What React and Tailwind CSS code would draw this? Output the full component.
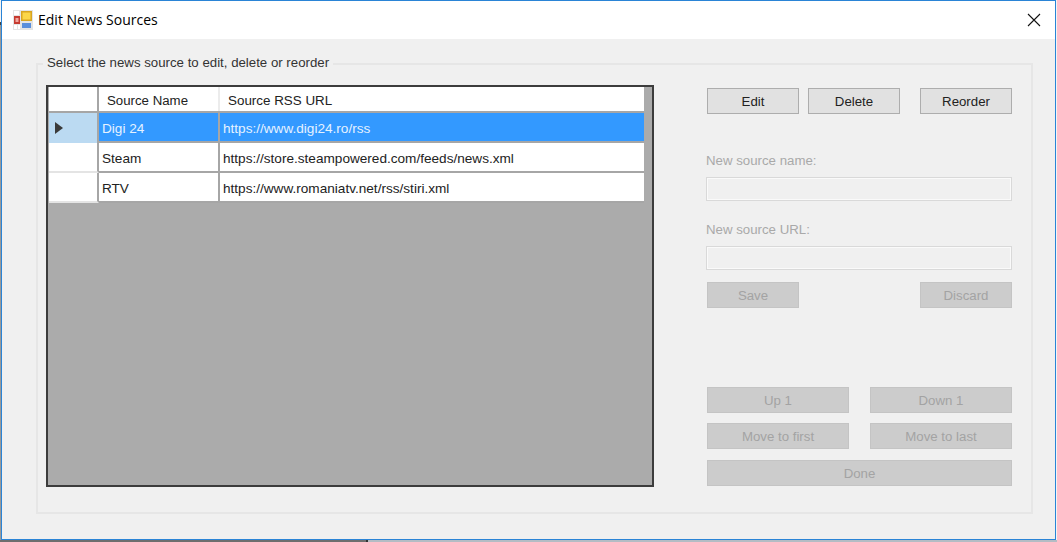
import React from 'react';

const rows = [
  { name: 'Digi 24', url: 'https://www.digi24.ro/rss', selected: true },
  { name: 'Steam', url: 'https://store.steampowered.com/feeds/news.xml' },
  { name: 'RTV', url: 'https://www.romaniatv.net/rss/stiri.xml' },
];

// Enabled and disabled WinForms buttons
const Btn = ({ w, disabled, children }) => (
  <div
    className={
      disabled
        ? `${w} h-[26px] pt-px flex items-center justify-center border border-[#c4c4c4] bg-[#cccccc] text-[#a3a3a3]`
        : `${w} h-[26px] pt-px flex items-center justify-center border border-[#adadad] bg-[#e1e1e1] text-[#222222]`
    }
  >
    {children}
  </div>
);

const Field = ({ label }) => (
  <div className="flex flex-col">
    <div className="h-[17px] leading-[17px] text-[#a9a9a9]">{label}</div>
    <div className="mt-[8px] w-[306px] h-[24px] border border-[#d9d9d9] bg-[#f0f0f0] shadow-[inset_0_0_0_1px_#fafafa]" />
  </div>
);

export default function App() {
  return (
    <div className="w-[1057px] h-[542px] overflow-hidden bg-white flex flex-col font-['Liberation_Sans',sans-serif] text-[13.25px]">
      <div className="flex h-[540px]">
        {/* Desktop showing to the left of the window */}
        <div className="w-px flex flex-col">
          <div className="h-[22px] bg-[#f4f4f4]" />
          <div className="h-[3px] bg-[#444444]" />
          <div className="flex-1 bg-[#9a9a9a]" />
        </div>

        <div className="w-[1055px] h-[540px] border border-[#2a84d6] bg-[#f0f0f0] flex flex-col">
          {/* Title bar */}
          <div className="h-[38px] shrink-0 bg-white flex items-center pl-[11px] pr-[14px]">
            <svg width="20" height="20" viewBox="0 0 20 20" className="shrink-0">
              <rect x="0" y="0" width="20" height="20" fill="#e4e4e4" />
              <rect x="1" y="1" width="5" height="4" fill="#ffffff" />
              <rect x="1" y="6" width="6" height="8" fill="#c63a30" />
              <rect x="2.5" y="8" width="3" height="4" fill="#f0a8a0" />
              <rect x="8" y="1" width="11" height="10" fill="#d9a520" />
              <rect x="9.5" y="2.5" width="8" height="7" fill="#fbd648" />
              <rect x="9" y="13" width="9" height="5" fill="#5a8fdc" />
              <rect x="1" y="15" width="3" height="4" fill="#ffffff" />
              <rect x="5" y="15" width="2" height="4" fill="#ffffff" />
            </svg>
            <span className="ml-[5px] pb-[2px] font-['Open_Sans',sans-serif] text-[14px] text-black">Edit News Sources</span>
            <svg width="14" height="14" viewBox="0 0 14 14" className="ml-auto mb-px">
              <path d="M1 1 L13 13 M13 1 L1 13" stroke="#111111" strokeWidth="1.1" fill="none" />
            </svg>
          </div>

          {/* Group box */}
          <fieldset className="ml-[34px] mt-[16px] w-[995px] h-[459px] border-2 border-[#e6e6e6] pl-[8px] pr-[19px] flex">
            <legend className="-ml-[3px] px-[4px] h-[17px] leading-[16px] text-[#333333]">
              Select the news source to edit, delete or reorder
            </legend>
            <div className="flex w-full">
              {/* Data grid */}
              <div className="mt-[13px] w-[608px] h-[402px] border-2 border-[#3c3c3c] bg-[#ababab] shrink-0">
                <div className="w-[595px] ml-px bg-white">
                  <div className="flex h-[26px] border-b-2 border-[#a6a6a6] text-[#222222]">
                    <div className="w-[50px] border-r-2 border-[#a6a6a6]" />
                    <div className="w-[121px] pl-[8px] leading-[28px] border-r-2 border-[#ececec]">Source Name</div>
                    <div className="flex-1 pl-[8px] leading-[28px] text-[13.4px]">Source RSS URL</div>
                  </div>
                  {rows.map((r) => (
                    <div key={r.name} className="flex h-[30px] leading-[32px] text-[13.6px]">
                      <div
                        className={
                          r.selected
                            ? 'w-[50px] flex items-center pl-[6px] bg-[#bbdaf2] border-r-2 border-[#a6a6a6]'
                            : 'w-[50px] bg-white border-r-2 border-b-2 border-r-[#a6a6a6] border-b-[#e4e4e4]'
                        }
                      >
                        {r.selected && (
                          <svg width="8" height="12" viewBox="0 0 8 12">
                            <path d="M0 0 L8 6 L0 12 Z" fill="#3a3a3a" />
                          </svg>
                        )}
                      </div>
                      <div
                        className={
                          r.selected
                            ? 'w-[121px] pl-[3px] bg-[#3399ff] text-[#e6f2ff] border-r-2 border-b-2 border-[#a6a6a6]'
                            : 'w-[121px] pl-[3px] bg-white text-[#222222] border-r-2 border-b-2 border-[#a6a6a6]'
                        }
                      >
                        {r.name}
                      </div>
                      <div
                        className={
                          r.selected
                            ? 'flex-1 pl-[3px] bg-[#3399ff] text-[#e6f2ff] border-b-2 border-[#a6a6a6]'
                            : 'flex-1 pl-[3px] bg-white text-[#222222] border-b-2 border-[#a6a6a6]'
                        }
                      >
                        {r.url}
                      </div>
                    </div>
                  ))}
                </div>
              </div>

              {/* Right side controls */}
              <div className="ml-[52px] mt-[16px] w-[306px] shrink-0 flex flex-col">
                <div className="flex justify-between pl-px">
                  <div className="flex gap-[9px]">
                    <Btn w="w-[92px]">Edit</Btn>
                    <Btn w="w-[92px]">Delete</Btn>
                  </div>
                  <Btn w="w-[92px]">Reorder</Btn>
                </div>
                <div className="mt-[38px]">
                  <Field label="New source name:" />
                </div>
                <div className="mt-[20px]">
                  <Field label="New source URL:" />
                </div>
                <div className="mt-[12px] flex justify-between pl-px">
                  <Btn w="w-[92px]" disabled>Save</Btn>
                  <Btn w="w-[92px]" disabled>Discard</Btn>
                </div>
                <div className="mt-[79px] pl-px grid grid-cols-[142px_142px] justify-between gap-y-[10px]">
                  <Btn w="w-[142px]" disabled>Up 1</Btn>
                  <Btn w="w-[142px]" disabled>Down 1</Btn>
                  <Btn w="w-[142px]" disabled>Move to first</Btn>
                  <Btn w="w-[142px]" disabled>Move to last</Btn>
                  <div className="col-span-2 mt-px">
                    <Btn w="w-full" disabled>Done</Btn>
                  </div>
                </div>
              </div>
            </div>
          </fieldset>
        </div>

        <div className="w-px bg-[#f4f4f4]" />
      </div>

      {/* Desktop showing below the window */}
      <div className="flex h-[2px]">
        <div className="w-[366px] bg-[#6e6e6e]" />
        <div className="w-[2px] bg-[#333333]" />
        <div className="flex-1 bg-[#b4bcc4]" />
      </div>
    </div>
  );
}
